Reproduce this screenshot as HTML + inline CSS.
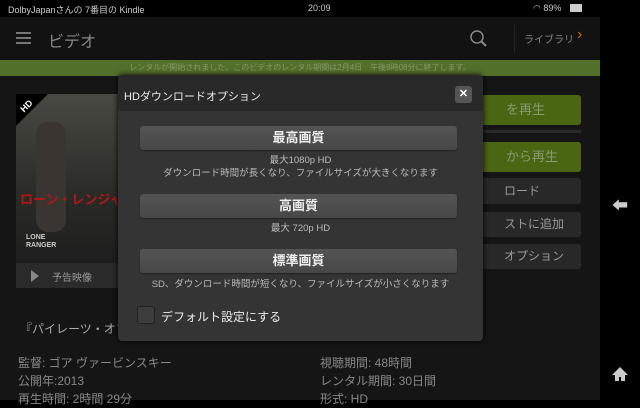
<!DOCTYPE html>
<html><head><meta charset="utf-8"><style>
*{margin:0;padding:0;box-sizing:border-box}
body{width:640px;height:400px;overflow:hidden;background:#000;font-family:"Liberation Sans","Noto Sans CJK JP",sans-serif;position:relative;color:#ddd}
.a{position:absolute}
.btn{position:absolute;left:140px;width:317px;height:24px;background:linear-gradient(#545454,#474747);border-radius:3px;color:#eee;font-size:13px;font-weight:bold;text-align:center;line-height:24px;box-shadow:0 1px 1px #222}
.t{position:absolute;left:118px;width:365px;text-align:center;font-size:9.5px;color:#bbb;line-height:13px}
.rb{position:absolute;left:470px;width:111px;border-radius:3px;font-size:12px;color:#999;padding-left:10px;white-space:nowrap}
</style></head><body>
<div class="a" style="left:0;top:0;width:600px;height:17px;background:#000;font-size:9px;color:#ccc">
 <span class="a" style="left:8px;top:3px">DolbyJapanさんの 7番目の Kindle</span>
 <span class="a" style="left:308px;top:3px">20:09</span>
 <span class="a" style="left:533px;top:3px">◠ 89%</span>
 <span class="a" style="left:570px;top:4px;width:12px;height:8px;border:1px solid #ccc;background:#ccc"></span>
</div>
<div class="a" style="left:0;top:17px;width:600px;height:43px;background:#121212">
 <div class="a" style="left:16px;top:15px;width:15px;height:2px;background:#777;box-shadow:0 5px 0 #777,0 10px 0 #777"></div>
 <span class="a" style="left:48px;top:11px;font-size:16px;color:#888">ビデオ</span>
 <svg class="a" style="left:469px;top:12px" width="20" height="20"><circle cx="8" cy="8" r="6" stroke="#888" stroke-width="1.5" fill="none"/><line x1="12.5" y1="12.5" x2="17" y2="17" stroke="#888" stroke-width="2"/></svg>
 <div class="a" style="left:514px;top:8px;width:1px;height:28px;background:#222"></div>
 <span class="a" style="left:524px;top:14px;font-size:10px;color:#888">ライブラリ</span>
 <span class="a" style="left:577px;top:9px;font-size:16px;color:#c07010">›</span>
</div>
<div class="a" style="left:0;top:60px;width:600px;height:16px;background:#53702a;font-size:8px;color:#86996a;text-align:center;line-height:16px">レンタルが開始されました。このビデオのレンタル期間は2月4日　午後8時08分に終了します。</div>
<div class="a" style="left:0;top:76px;width:600px;height:324px;background:#151515"></div>
<div class="a" style="left:16px;top:94px;width:102px;height:169px;overflow:hidden;background:linear-gradient(#4a4a44,#2a2a26 60%,#1e1e1e)">
 <div class="a" style="left:0;top:0;width:0;height:0;border-top:32px solid #000;border-right:32px solid transparent"></div>
 <span class="a" style="left:4px;top:7px;font-size:9px;color:#fff;transform:rotate(-45deg);font-weight:bold">HD</span>
 <span class="a" style="left:20px;top:28px;width:30px;height:110px;background:#3a3530;border-radius:12px"></span>
 <span class="a" style="left:4px;top:95px;font-size:13px;color:#b01818;font-weight:bold;white-space:nowrap">ローン・レンジャー</span>
 <span class="a" style="left:10px;top:140px;font-size:7px;color:#ccc;font-weight:bold;line-height:8px">LONE<br>RANGER</span>
</div>
<div class="a" style="left:16px;top:263px;width:102px;height:25px;background:#2a2a2a">
 <div class="a" style="left:15px;top:7px;border-left:8px solid #888;border-top:6px solid transparent;border-bottom:6px solid transparent"></div>
 <span class="a" style="left:36px;top:6px;font-size:10px;color:#999">予告映像</span>
</div>
<div class="rb" style="top:95px;height:30px;background:#4a6613;color:#8a9a70;line-height:30px;font-size:13px">　　を再生</div>
<div class="a" style="left:470px;top:130px;width:111px;height:3px;background:#2a2a2a"></div>
<div class="rb" style="top:142px;height:30px;background:#4a6613;color:#8a9a70;line-height:30px;font-size:13px">　　から再生</div>
<div class="rb" style="top:178px;height:26px;background:#282828;line-height:26px">　　ロード</div>
<div class="rb" style="top:212px;height:25px;background:#282828;line-height:25px">　　ストに追加</div>
<div class="rb" style="top:244px;height:25px;background:#282828;line-height:25px">　　オプション</div>
<div class="a" style="left:20px;top:320px;font-size:12px;color:#aaa">『パイレーツ・オブ</div>
<div class="a" style="left:18px;top:354px;font-size:12px;line-height:18px;color:#888">監督: ゴア ヴァービンスキー<br>公開年:2013<br>再生時間: 2時間 29分</div>
<div class="a" style="left:320px;top:354px;font-size:12px;line-height:18px;color:#888">視聴期間: 48時間<br>レンタル期間: 30日間<br>形式: HD</div>
<div class="a" style="left:118px;top:75px;width:365px;height:266px;background:#343434;border-radius:4px;box-shadow:0 0 6px #000">
 <div class="a" style="left:0;top:0;width:365px;height:36px;background:#292929;border-radius:4px 4px 0 0"></div>
 <span class="a" style="left:6px;top:13px;font-size:11px;color:#eee">HDダウンロードオプション</span>
 <div class="a" style="left:337px;top:11px;width:17px;height:17px;background:#555;border-radius:3px;color:#fff;font-size:11px;text-align:center;line-height:17px;font-weight:bold">✕</div>
</div>
<div class="btn" style="top:126px">最高画質</div>
<div class="t" style="top:154px">最大1080p HD<br>ダウンロード時間が長くなり、ファイルサイズが大きくなります</div>
<div class="btn" style="top:194px">高画質</div>
<div class="t" style="top:222px">最大 720p HD</div>
<div class="btn" style="top:249px">標準画質</div>
<div class="t" style="top:278px">SD、ダウンロード時間が短くなり、ファイルサイズが小さくなります</div>
<div class="a" style="left:137px;top:306px;width:18px;height:18px;background:#3c3c3c;border:1px solid #222;border-radius:3px"></div>
<span class="a" style="left:161px;top:308px;font-size:12px;color:#eee">デフォルト設定にする</span>
<div class="a" style="left:612px;top:192px;font-size:16px;color:#ccc">⬅</div>
<svg class="a" style="left:611px;top:366px" width="18" height="16"><path d="M9 1 L1 9 H4 V15 H8 V11 H10 V15 H14 V9 H17 Z" fill="#ccc"/></svg>
</body></html>
